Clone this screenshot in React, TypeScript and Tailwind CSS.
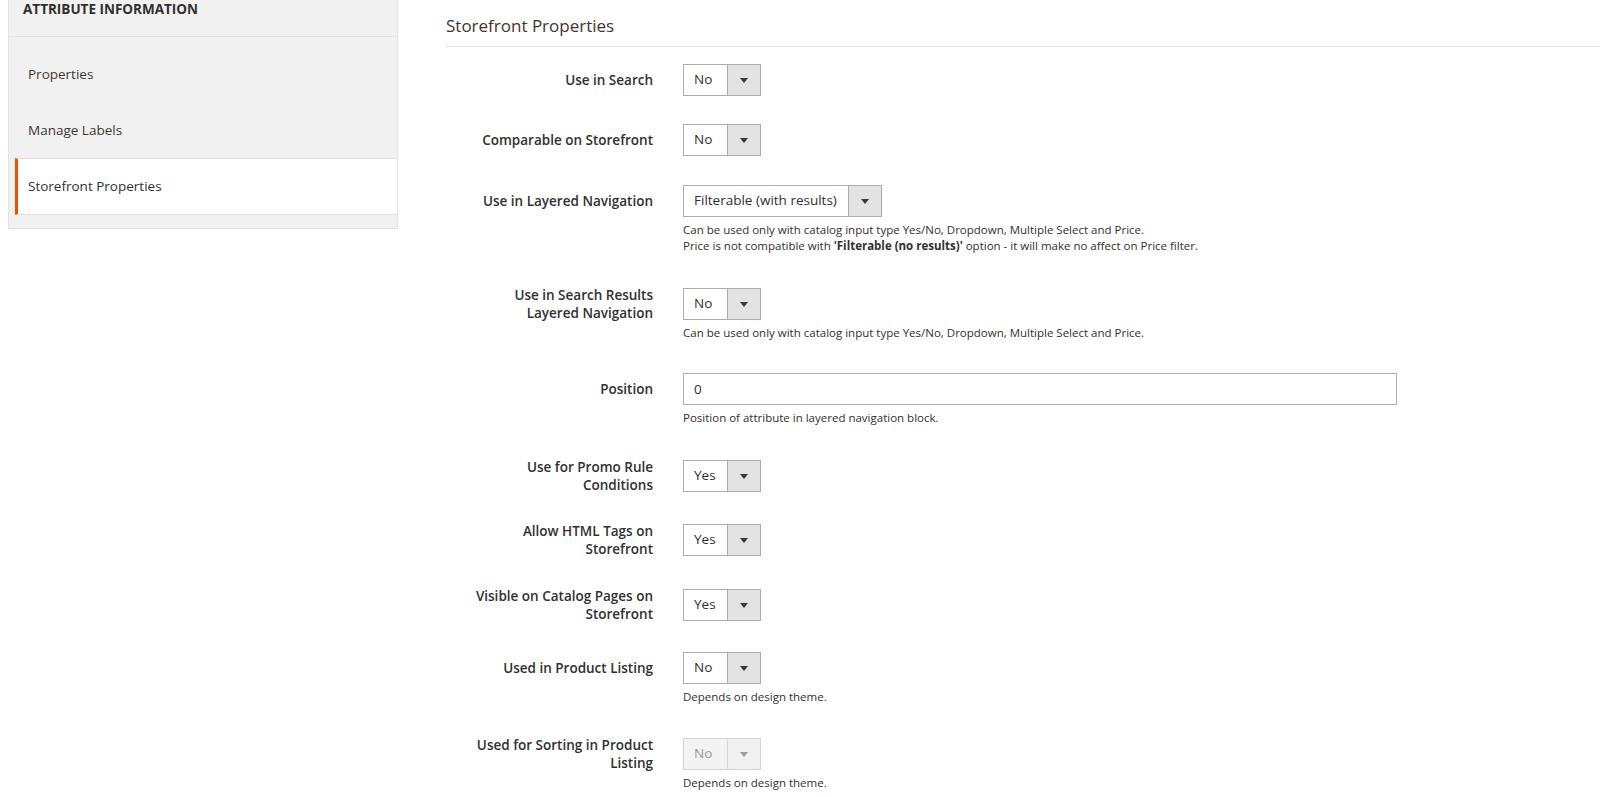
type SelectProps = {
  value: string;
  wide?: boolean;
  disabled?: boolean;
};

function Select({ value, wide, disabled }: SelectProps) {
  return (
    <div
      className={
        "flex h-[32px] border border-[#adadad] text-[13.5px] " +
        (wide ? "w-[199px] " : "w-[78px] ") +
        (disabled ? "bg-[#e9e9e9] opacity-50 text-[#303030]" : "bg-white text-[#303030]")
      }
    >
      <div className="flex flex-1 items-center pl-[10px] leading-none">{value}</div>
      <div className="flex w-[33px] shrink-0 items-center justify-center border-l border-[#adadad] bg-[#e3e3e3]">
        <svg width="8" height="5" viewBox="0 0 8 5">
          <path d="M0 0h8L4 5z" fill="#41362f" />
        </svg>
      </div>
    </div>
  );
}

function Note({ children }: { children: React.ReactNode }) {
  return <div className="mt-[5px] text-[11.5px] leading-[16px] text-[#303030]">{children}</div>;
}

type RowProps = {
  label: React.ReactNode;
  gap: string;
  children: React.ReactNode;
};

function Row({ label, gap, children }: RowProps) {
  return (
    <div className={"flex items-start " + gap}>
      <div className="flex h-[32px] w-[207px] shrink-0 items-center justify-end text-right text-[13.5px] font-semibold leading-[18px] text-[#303030]">
        <span>{label}</span>
      </div>
      <div className="ml-[30px] flex-1">{children}</div>
    </div>
  );
}

export default function App() {
  return (
    <div className="flex min-h-[797px] bg-white font-['Open_Sans',sans-serif] text-[#303030]">
      <aside className="ml-[8px] w-[390px] shrink-0 self-start border border-t-0 border-[#e3e3e3] bg-[#f1f1f1]">
        <div className="h-[37px] border-b border-[#e3e3e3] pl-[14px] text-[13.5px] font-bold leading-[18px] text-[#303030]">
          ATTRIBUTE INFORMATION
        </div>
        <ul className="pb-[13px] pl-[6px] pt-[9px] text-[13.5px]">
          <li className="flex h-[56px] items-center pl-[13px] text-[#41362f]">Properties</li>
          <li className="flex h-[56px] items-center pl-[13px] text-[#41362f]">Manage Labels</li>
          <li className="flex h-[57px] items-center border-y border-l-[3px] border-y-[#e3e3e3] border-l-[#eb5202] bg-white pl-[10px] text-[#303030]">
            Storefront Properties
          </li>
        </ul>
      </aside>

      <main className="ml-[48px] flex-1">
        <h2 className="h-[47px] border-b border-[#e3e3e3] pt-[15px] text-[17px] leading-[22px] text-[#41362f]">
          Storefront Properties
        </h2>

        <Row label="Use in Search" gap="mt-[17px]">
          <Select value="No" />
        </Row>

        <Row label="Comparable on Storefront" gap="mt-[28px]">
          <Select value="No" />
        </Row>

        <Row label="Use in Layered Navigation" gap="mt-[29px]">
          <Select value="Filterable (with results)" wide />
          <Note>
            Can be used only with catalog input type Yes/No, Dropdown, Multiple Select and Price.
            <br />
            Price is not compatible with <b>'Filterable (no results)'</b> option - it will make no
            affect on Price filter.
          </Note>
        </Row>

        <Row
          label={
            <>
              Use in Search Results
              <br />
              Layered Navigation
            </>
          }
          gap="mt-[34px]"
        >
          <Select value="No" />
          <Note>Can be used only with catalog input type Yes/No, Dropdown, Multiple Select and Price.</Note>
        </Row>

        <Row label="Position" gap="mt-[32px]">
          <div className="flex h-[32px] w-[714px] items-center border border-[#adadad] bg-white pl-[10px] text-[13.5px] text-[#303030]">
            0
          </div>
          <Note>Position of attribute in layered navigation block.</Note>
        </Row>

        <Row
          label={
            <>
              Use for Promo Rule
              <br />
              Conditions
            </>
          }
          gap="mt-[34px]"
        >
          <Select value="Yes" />
        </Row>

        <Row
          label={
            <>
              Allow HTML Tags on
              <br />
              Storefront
            </>
          }
          gap="mt-[32px]"
        >
          <Select value="Yes" />
        </Row>

        <Row
          label={
            <>
              Visible on Catalog Pages on
              <br />
              Storefront
            </>
          }
          gap="mt-[33px]"
        >
          <Select value="Yes" />
        </Row>

        <Row label="Used in Product Listing" gap="mt-[31px]">
          <Select value="No" />
          <Note>Depends on design theme.</Note>
        </Row>

        <Row
          label={
            <>
              Used for Sorting in Product
              <br />
              Listing
            </>
          }
          gap="mt-[33px]"
        >
          <Select value="No" disabled />
          <Note>Depends on design theme.</Note>
        </Row>
      </main>
    </div>
  );
}
